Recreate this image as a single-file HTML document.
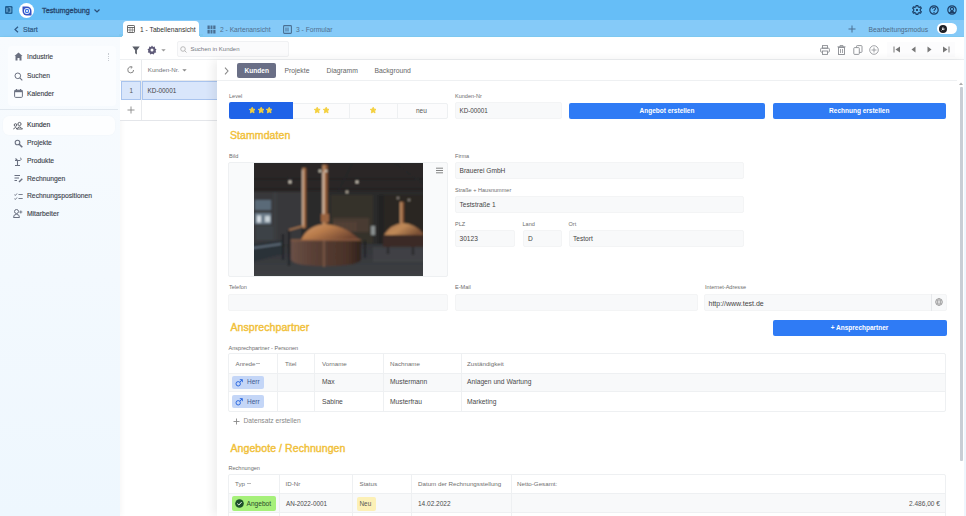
<!DOCTYPE html>
<html><head><meta charset="utf-8">
<style>
*{box-sizing:border-box;margin:0;padding:0}
html,body{width:966px;height:516px;overflow:hidden;background:#fff;font-family:"Liberation Sans",sans-serif;color:#333;}
.a{position:absolute}
.t{position:absolute;white-space:nowrap;line-height:1}
#top{left:0;top:0;width:966px;height:20px;background:#66bef7}
#bar2{left:0;top:20px;width:966px;height:17.5px;background:#85caf8}
#side{left:0;top:37px;width:120px;height:479px;background:linear-gradient(#f8fbfe,#eef7fe);box-shadow:2px 0 5px rgba(0,0,0,0.035)}
.sitem{position:absolute;left:0;width:120px;height:18px}
.sitem .t{left:27px;top:6px;font-size:6.75px;color:#3b3f4a;-webkit-text-stroke:0.12px #3b3f4a}
.sitem svg{position:absolute}
.lbl{position:absolute;white-space:nowrap;line-height:1;font-size:5.55px;color:#6e6e6e}
.inp{position:absolute;background:#f8f9fa;border:1px solid #f3f4f5;border-radius:2px}
.itx{position:absolute;white-space:nowrap;line-height:1;font-size:6.6px;color:#454545}
.btn{position:absolute;background:#2f7bf5;border-radius:2px;color:#fff;font-weight:bold;font-size:6.5px;text-align:center;line-height:16.5px}
.h2{position:absolute;white-space:nowrap;line-height:1;font-size:10.5px;color:#f1bf38;-webkit-text-stroke:0.4px #f1bf38;letter-spacing:0.08px}
.th{position:absolute;white-space:nowrap;line-height:1;font-size:6.2px;color:#707070}
.td{position:absolute;white-space:nowrap;line-height:1;font-size:6.7px;color:#4a4a4a}
.ftab{position:absolute;white-space:nowrap;line-height:1;font-size:6.8px;color:#666}
.vl{position:absolute;width:1px;background:#eef0f2}
</style></head><body>

<div id="top" class="a">
  <svg class="a" style="left:5px;top:5.8px" width="7.5" height="8" viewBox="0 0 7.5 8"><rect x="0" y="0" width="7.5" height="8" rx="1.2" fill="#1f5f92"/><path d="M2 1.8V6.2" stroke="#8cc6ee" stroke-width="0.9"/><path d="M3.6 1.8H5.8V6.2H3.6" fill="none" stroke="#8cc6ee" stroke-width="0.8"/></svg>
  <div class="a" style="left:19px;top:2.7px;width:15.4px;height:15.4px;border-radius:50%;background:#fff"></div>
  <svg class="a" style="left:22px;top:5.5px" width="10" height="10" viewBox="0 0 10 10"><path d="M0.5 0.5H5A4.5 4.5 0 0 1 9.5 5V9.5H5A4.5 4.5 0 0 1 0.5 5Z" fill="#3552c4"/><circle cx="5" cy="5" r="3" fill="#fff"/><circle cx="5" cy="5" r="2.2" fill="#3a74e6"/><circle cx="5" cy="5" r="1" fill="#fff"/></svg>
  <div class="t" style="left:42px;top:7px;font-size:7.3px;color:#274870;-webkit-text-stroke:0.3px #274870">Testumgebung</div>
  <svg class="a" style="left:94px;top:8.8px" width="6" height="4" viewBox="0 0 6 4"><path d="M0.5 0.5 L3 3 L5.5 0.5" fill="none" stroke="#2b4f78" stroke-width="1.2"/></svg>
  <svg class="a" style="left:911.5px;top:5px" width="10" height="10" viewBox="0 0 10 10"><path d="M4.2 0.5H5.8L6.1 1.8L7.3 2.4L8.5 1.8L9.3 3.2L8.3 4.1V5.9L9.3 6.8L8.5 8.2L7.3 7.6L6.1 8.2L5.8 9.5H4.2L3.9 8.2L2.7 7.6L1.5 8.2L0.7 6.8L1.7 5.9V4.1L0.7 3.2L1.5 1.8L2.7 2.4L3.9 1.8Z" fill="none" stroke="#1d3f66" stroke-width="1.2" stroke-linejoin="round"/><circle cx="5" cy="5" r="1" fill="#0e2240"/></svg>
  <svg class="a" style="left:929.4px;top:5.2px" width="10" height="10" viewBox="0 0 10 10"><circle cx="5" cy="5" r="4.2" fill="none" stroke="#1d3f66" stroke-width="1.2"/><path d="M3.5 3.8Q3.5 2.3 5 2.3Q6.5 2.3 6.5 3.6Q6.5 4.5 5.6 4.9Q5 5.2 5 6" fill="none" stroke="#1d3f66" stroke-width="1.1"/><circle cx="5" cy="7.5" r="0.7" fill="#1d3f66"/></svg>
  <svg class="a" style="left:946.8px;top:5.2px" width="10" height="10" viewBox="0 0 10 10"><circle cx="5" cy="5" r="4.2" fill="none" stroke="#1d3f66" stroke-width="1.2"/><circle cx="5" cy="4" r="1.6" fill="none" stroke="#1d3f66" stroke-width="1.1"/><path d="M2.3 8.2Q3 6.3 5 6.3Q7 6.3 7.7 8.2" fill="#1d3f66" stroke="#1d3f66" stroke-width="1"/></svg>
</div>
<div id="bar2" class="a">
  <svg class="a" style="left:14px;top:5.5px" width="5" height="7" viewBox="0 0 5 7"><path d="M4 0.7 L1 3.5 L4 6.3" fill="none" stroke="#2f5a86" stroke-width="1.2"/></svg>
  <div class="t" style="left:23px;top:5.5px;font-size:7px;color:#2f5a86;-webkit-text-stroke:0.2px #2f5a86">Start</div>
  <div class="a" style="left:0;top:15.5px;width:966px;height:2px;background:#7dc8f0"></div>
  <div class="a" style="left:119px;top:13.5px;width:4px;height:4px;background:radial-gradient(circle at 0 0,#7dc8f0 3.8px,#fff 4.2px)"></div>
  <div class="a" style="left:199px;top:13.5px;width:4px;height:4px;background:radial-gradient(circle at 100% 0,#7dc8f0 3.8px,#fff 4.2px)"></div>
  <div class="a" style="left:123px;top:1px;width:76px;height:16.5px;background:#fff;border-radius:4px 4px 0 0"></div>
  <svg class="a" style="left:127px;top:5px" width="8" height="8" viewBox="0 0 8 8"><rect x="0.5" y="0.5" width="7" height="7" rx="0.6" fill="none" stroke="#5a5a5a" stroke-width="0.9"/><line x1="0.5" y1="2.5" x2="7.5" y2="2.5" stroke="#5a5a5a" stroke-width="0.9"/><line x1="0.5" y1="5" x2="7.5" y2="5" stroke="#5a5a5a" stroke-width="0.6"/><line x1="3" y1="2.5" x2="3" y2="7.5" stroke="#5a5a5a" stroke-width="0.6"/><line x1="5.3" y1="2.5" x2="5.3" y2="7.5" stroke="#5a5a5a" stroke-width="0.6"/></svg>
  <div class="t" style="left:140px;top:6.5px;font-size:6.7px;color:#333">1 - Tabellenansicht</div>
  <svg class="a" style="left:207px;top:5px" width="9" height="9" viewBox="0 0 9 9"><rect x="0.5" y="0.5" width="8" height="8" fill="#4a6f92"/><line x1="3.2" y1="0" x2="3.2" y2="9" stroke="#85caf8" stroke-width="0.8"/><line x1="5.8" y1="0" x2="5.8" y2="9" stroke="#85caf8" stroke-width="0.8"/><line x1="0" y1="4.5" x2="9" y2="4.5" stroke="#85caf8" stroke-width="0.8"/></svg>
  <div class="t" style="left:220px;top:6.5px;font-size:6.7px;color:#50708f">2 - Kartenansicht</div>
  <svg class="a" style="left:283px;top:5px" width="9" height="9" viewBox="0 0 9 9"><rect x="0.6" y="0.6" width="7.8" height="7.8" rx="0.8" fill="none" stroke="#4a6f92" stroke-width="1.1"/><line x1="3" y1="2.5" x2="3" y2="6.5" stroke="#4a6f92" stroke-width="1"/><line x1="5" y1="2.5" x2="5" y2="6.5" stroke="#4a6f92" stroke-width="1"/></svg>
  <div class="t" style="left:296px;top:6.5px;font-size:6.7px;color:#50708f">3 - Formular</div>
  <svg class="a" style="left:848px;top:4.5px" width="8" height="8" viewBox="0 0 8 8"><path d="M4 0.5V7.5M0.5 4H7.5" stroke="#4a6f92" stroke-width="1"/></svg>
  <div class="t" style="left:868.5px;top:6.5px;font-size:6.7px;color:#4c6a88">Bearbeitungsmodus</div>
  <div class="a" style="left:937px;top:3px;width:20px;height:11px;border-radius:6px;background:#fff"></div>
  <div class="a" style="left:939px;top:4.5px;width:8px;height:8px;border-radius:50%;background:#1e1e24"></div>
  <svg class="a" style="left:940.5px;top:6px" width="5" height="5" viewBox="0 0 5 5"><path d="M0.6 4.4L2.6 2.4M2.3 1.4A1.1 1.1 0 1 0 3.6 2.7" fill="none" stroke="#fff" stroke-width="0.9"/></svg>
</div>

<div id="side" class="a">
  <div class="a" style="left:8px;top:9px;width:108px;height:60px;background:#fbfdff;border-radius:4px"></div>
  <div class="a" style="left:108px;top:16px;width:1.5px;height:8px;border-left:1px dotted #c8ccd2"></div>
  <div class="a" style="left:0;top:71.5px;width:118px;height:1px;background:#e1e8ef"></div>
  <div class="a" style="left:3px;top:78.5px;width:112px;height:19px;background:#fdfeff;border-radius:6px;box-shadow:0 0 2px rgba(0,0,0,0.03)"></div>
  <div class="sitem" style="top:11px">
    <svg width="9" height="9" viewBox="0 0 9 9" style="left:13.5px;top:4px"><path d="M4.5 0.5 L8.5 4 L7.5 4 L7.5 8.5 L5.5 8.5 L5.5 6 L3.5 6 L3.5 8.5 L1.5 8.5 L1.5 4 L0.5 4 Z" fill="#6a7080"/></svg>
    <div class="t">Industrie</div></div>
  <div class="sitem" style="top:30px">
    <svg width="9" height="9" viewBox="0 0 9 9" style="left:13.5px;top:4.5px"><circle cx="3.8" cy="3.8" r="2.8" fill="none" stroke="#6a7080" stroke-width="1"/><path d="M5.8 5.8 L8.3 8.3" stroke="#6a7080" stroke-width="1.1"/></svg>
    <div class="t">Suchen</div></div>
  <div class="sitem" style="top:48px">
    <svg width="9" height="9" viewBox="0 0 9 9" style="left:13.5px;top:4px"><rect x="0.6" y="1.2" width="7.8" height="7.2" rx="1" fill="none" stroke="#6a7080" stroke-width="1"/><rect x="0.6" y="1.2" width="7.8" height="2" fill="#6a7080"/><path d="M2.5 0V1.5M6.5 0V1.5" stroke="#6a7080" stroke-width="1"/></svg>
    <div class="t">Kalender</div></div>
  <div class="sitem" style="top:79px">
    <svg width="10" height="9" viewBox="0 0 10 9" style="left:13px;top:4.5px"><circle cx="2.5" cy="4" r="1.3" fill="none" stroke="#3b3f4a" stroke-width="0.8"/><circle cx="6.5" cy="3" r="1.6" fill="none" stroke="#3b3f4a" stroke-width="0.8"/><path d="M0.3 8 Q2.5 5 4.5 8 M3.5 8 Q6.5 4 9.5 8Z" fill="none" stroke="#3b3f4a" stroke-width="0.8"/></svg>
    <div class="t" style="color:#2a2d36">Kunden</div></div>
  <div class="sitem" style="top:97px">
    <svg width="9" height="9" viewBox="0 0 9 9" style="left:13.5px;top:4.5px"><circle cx="3.5" cy="3.5" r="2.3" fill="none" stroke="#6a7080" stroke-width="1.1"/><path d="M5 5 L8.3 8.3" stroke="#6a7080" stroke-width="1.6"/></svg>
    <div class="t">Projekte</div></div>
  <div class="sitem" style="top:115px">
    <svg width="9" height="9" viewBox="0 0 9 9" style="left:13.5px;top:4.5px"><path d="M1 8.5H6M3.5 8.5V3.5M1 3.5H6M1.5 1.5 L3.5 3.5" stroke="#6a7080" stroke-width="1.1" fill="none"/><path d="M6 0.8 Q8.5 1.5 6.5 3.5" stroke="#6a7080" stroke-width="0.9" fill="none"/></svg>
    <div class="t">Produkte</div></div>
  <div class="sitem" style="top:132.5px">
    <svg width="9" height="9" viewBox="0 0 9 9" style="left:13.5px;top:4.5px"><path d="M0.5 1.5H6M0.5 4H5M0.5 6.5H3" stroke="#6a7080" stroke-width="1" fill="none"/><path d="M5 8 L8.3 4.7" stroke="#6a7080" stroke-width="1.4"/></svg>
    <div class="t">Rechnungen</div></div>
  <div class="sitem" style="top:150px">
    <svg width="9" height="9" viewBox="0 0 9 9" style="left:13.5px;top:4.5px"><path d="M0.3 2.5L1.3 3.5L3 1.5M0.3 6.5L1.3 7.5L3 5.5M4.5 2.5H8.7M4.5 6.5H8.7" stroke="#6a7080" stroke-width="0.9" fill="none"/></svg>
    <div class="t">Rechnungspositionen</div></div>
  <div class="sitem" style="top:167.5px">
    <svg width="10" height="9" viewBox="0 0 10 9" style="left:13px;top:4.5px"><circle cx="3.5" cy="2.5" r="2" fill="none" stroke="#6a7080" stroke-width="1"/><path d="M0.5 8.5 Q0.5 5.3 3.5 5.3 Q6.5 5.3 6.5 8.5Z" fill="none" stroke="#6a7080" stroke-width="1"/><path d="M7.8 1.5V4.5M6.3 3H9.3" stroke="#6a7080" stroke-width="0.9"/></svg>
    <div class="t">Mitarbeiter</div></div>
</div>

<div class="a" style="left:120px;top:37px;width:846px;height:23px;background:#fff;border-bottom:1px solid #eef0f2"></div>
<svg class="a" style="left:131.8px;top:45.5px" width="8" height="9" viewBox="0 0 8 9"><path d="M0.3 0.5H7.7L4.9 4.2V8.5L3.1 7.3V4.2Z" fill="#5b5f69"/></svg>
<svg class="a" style="left:147px;top:44.5px" width="10" height="10" viewBox="0 0 10 10"><path d="M5 0.6 L6.1 2 L7.8 1.6 L8 3.4 L9.5 4.3 L8.6 5.8 L9.2 7.4 L7.5 7.8 L6.8 9.4 L5 8.7 L3.2 9.4 L2.5 7.8 L0.8 7.4 L1.4 5.8 L0.5 4.3 L2 3.4 L2.2 1.6 L3.9 2 Z" fill="#5e5a78"/><circle cx="5" cy="5" r="1.5" fill="#fff"/></svg>
<svg class="a" style="left:160.5px;top:48.5px" width="5" height="3" viewBox="0 0 5 3"><path d="M0.3 0.3L2.5 2.5L4.7 0.3Z" fill="#999"/></svg>
<div class="a" style="left:177px;top:41px;width:112px;height:16px;background:#fbfbfc;border:1px solid #f0f1f3;border-radius:2px"></div>
<svg class="a" style="left:180px;top:45.5px" width="7" height="7" viewBox="0 0 7 7"><circle cx="3" cy="3" r="2.3" fill="none" stroke="#aaa" stroke-width="0.8"/><path d="M4.7 4.7L6.5 6.5" stroke="#aaa" stroke-width="0.8"/></svg>
<div class="t" style="left:190.5px;top:46px;font-size:6px;color:#74787e">Suchen in Kunden</div>

<svg class="a" style="left:820px;top:45px" width="10" height="10" viewBox="0 0 10 10"><rect x="2.5" y="0.6" width="5" height="2.6" fill="none" stroke="#8a8d92" stroke-width="0.9"/><rect x="0.6" y="3.2" width="8.8" height="4" rx="1" fill="none" stroke="#8a8d92" stroke-width="0.9"/><rect x="2.5" y="6" width="5" height="3.4" fill="#fff" stroke="#8a8d92" stroke-width="0.9"/></svg>
<svg class="a" style="left:836.5px;top:44.5px" width="9" height="10" viewBox="0 0 9 10"><path d="M0.5 1.8H8.5M3 1.8V0.6H6V1.8" stroke="#8a8d92" stroke-width="0.9" fill="none"/><rect x="1.5" y="2.5" width="6" height="7" fill="none" stroke="#8a8d92" stroke-width="0.9"/><path d="M3.5 4V8M5.5 4V8" stroke="#8a8d92" stroke-width="0.8"/></svg>
<svg class="a" style="left:852.5px;top:44.5px" width="10" height="10" viewBox="0 0 10 10"><rect x="3.5" y="0.6" width="5.5" height="6.8" rx="0.8" fill="none" stroke="#8a8d92" stroke-width="0.9"/><rect x="0.8" y="2.6" width="5.5" height="6.8" rx="0.8" fill="#fff" stroke="#8a8d92" stroke-width="0.9"/></svg>
<svg class="a" style="left:868.5px;top:44.5px" width="10" height="10" viewBox="0 0 10 10"><circle cx="5" cy="5" r="4.3" fill="none" stroke="#8a8d92" stroke-width="0.8"/><path d="M5 2.5V7.5M2.5 5H7.5" stroke="#8a8d92" stroke-width="0.8"/></svg>
<div class="a" style="left:887px;top:42px;width:68px;height:15px;background:#fcfcfd"></div>
<svg class="a" style="left:893px;top:46px" width="8" height="7" viewBox="0 0 8 7"><path d="M1 0.5V6.5" stroke="#777" stroke-width="1"/><path d="M7 0.5V6.5L2.5 3.5Z" fill="#777"/></svg>
<svg class="a" style="left:910px;top:46px" width="7" height="7" viewBox="0 0 7 7"><path d="M5.5 0.5V6.5L1.5 3.5Z" fill="#777"/></svg>
<svg class="a" style="left:926px;top:46px" width="7" height="7" viewBox="0 0 7 7"><path d="M1.5 0.5V6.5L5.5 3.5Z" fill="#777"/></svg>
<svg class="a" style="left:942px;top:46px" width="8" height="7" viewBox="0 0 8 7"><path d="M7 0.5V6.5" stroke="#777" stroke-width="1"/><path d="M1 0.5V6.5L5.5 3.5Z" fill="#777"/></svg>

<div class="a" style="left:120px;top:60px;width:97px;height:60px;background:#fff"></div>
<div class="a" style="left:141px;top:60px;width:1px;height:60px;background:#e8eaed"></div>
<div class="a" style="left:120px;top:79.5px;width:97px;height:1px;background:#e8eaed"></div>
<div class="a" style="left:120px;top:119.5px;width:97px;height:1.5px;background:#e4e6ea"></div>
<svg class="a" style="left:127px;top:66px" width="8" height="8" viewBox="0 0 8 8"><path d="M6.6 4 A2.9 2.9 0 1 1 4.6 1.2" fill="none" stroke="#777" stroke-width="0.9"/><path d="M3.4 0.2L5.3 1.2L3.8 2.6" fill="none" stroke="#777" stroke-width="0.8"/></svg>
<div class="t" style="left:147.8px;top:67px;font-size:6.2px;color:#6e7178">Kunden-Nr.</div>
<svg class="a" style="left:181.5px;top:69px" width="5" height="3" viewBox="0 0 5 3"><path d="M0.3 0.3L2.5 2.5L4.7 0.3Z" fill="#888"/></svg>
<div class="a" style="left:120.5px;top:80.5px;width:20px;height:19.5px;background:#d9e6fb;border:1px solid #a9c4ee"></div>
<div class="a" style="left:142px;top:80.5px;width:76px;height:19.5px;background:#d9e6fb;border:1px solid #a9c4ee;border-right:none"></div>
<div class="t" style="left:129.5px;top:87.5px;font-size:6.3px;color:#555">1</div>
<div class="t" style="left:147.5px;top:87.5px;font-size:6.4px;color:#444">KD-00001</div>
<svg class="a" style="left:127px;top:106px" width="8" height="8" viewBox="0 0 8 8"><path d="M4 0.5V7.5M0.5 4H7.5" stroke="#888" stroke-width="0.9"/></svg>

<div id="form" class="a" style="left:217px;top:60px;width:749px;height:456px;background:#fff;box-shadow:-4px 0 9px rgba(0,0,0,0.07)"></div>
<div class="a" style="left:217px;top:79.5px;width:740px;height:1px;background:#eef0f2"></div>
<svg class="a" style="left:224px;top:66.5px" width="5" height="8" viewBox="0 0 5 8"><path d="M1 0.7L4 4L1 7.3" fill="none" stroke="#888" stroke-width="1.1"/></svg>
<div class="a" style="left:237px;top:62.5px;width:39px;height:15px;background:#6a6f86;border-radius:2px"></div>
<div class="ftab" style="left:244.5px;top:67.5px;color:#fff;font-weight:bold;font-size:6.6px">Kunden</div>
<div class="ftab" style="left:284.5px;top:67.5px">Projekte</div>
<div class="ftab" style="left:326.5px;top:67.5px">Diagramm</div>
<div class="ftab" style="left:374.5px;top:67.5px">Background</div>

<div class="lbl" style="left:229px;top:93.5px">Level</div>
<div class="inp" style="left:229px;top:102.5px;width:219px;height:16px;background:#fcfcfd;border:1px solid #eef0f2"></div>
<div class="a" style="left:229px;top:102px;width:64px;height:17px;background:#1f63e8;border-radius:2px 0 0 2px"></div>
<div class="vl" style="left:349px;top:103px;height:15px"></div>
<div class="vl" style="left:397px;top:103px;height:15px"></div>
<svg class="a" style="left:248.8px;top:107.2px" width="6.4" height="6.4" viewBox="0 0 10 10"><path d="M5 0.4L6.35 3.35L9.6 3.7L7.15 5.9L7.9 9.3L5 7.6L2.1 9.3L2.85 5.9L0.4 3.7L3.65 3.35Z" fill="#f4d03e" stroke="#f4d03e" stroke-width="1.4" stroke-linejoin="round"/></svg><svg class="a" style="left:257.5px;top:107.2px" width="6.4" height="6.4" viewBox="0 0 10 10"><path d="M5 0.4L6.35 3.35L9.6 3.7L7.15 5.9L7.9 9.3L5 7.6L2.1 9.3L2.85 5.9L0.4 3.7L3.65 3.35Z" fill="#f4d03e" stroke="#f4d03e" stroke-width="1.4" stroke-linejoin="round"/></svg><svg class="a" style="left:266.1px;top:107.2px" width="6.4" height="6.4" viewBox="0 0 10 10"><path d="M5 0.4L6.35 3.35L9.6 3.7L7.15 5.9L7.9 9.3L5 7.6L2.1 9.3L2.85 5.9L0.4 3.7L3.65 3.35Z" fill="#f4d03e" stroke="#f4d03e" stroke-width="1.4" stroke-linejoin="round"/></svg>
<svg class="a" style="left:314.3px;top:107.2px" width="6.4" height="6.4" viewBox="0 0 10 10"><path d="M5 0.4L6.35 3.35L9.6 3.7L7.15 5.9L7.9 9.3L5 7.6L2.1 9.3L2.85 5.9L0.4 3.7L3.65 3.35Z" fill="#f4d03e" stroke="#f4d03e" stroke-width="1.4" stroke-linejoin="round"/></svg><svg class="a" style="left:322.6px;top:107.2px" width="6.4" height="6.4" viewBox="0 0 10 10"><path d="M5 0.4L6.35 3.35L9.6 3.7L7.15 5.9L7.9 9.3L5 7.6L2.1 9.3L2.85 5.9L0.4 3.7L3.65 3.35Z" fill="#f4d03e" stroke="#f4d03e" stroke-width="1.4" stroke-linejoin="round"/></svg>
<svg class="a" style="left:369.8px;top:107.2px" width="6.4" height="6.4" viewBox="0 0 10 10"><path d="M5 0.4L6.35 3.35L9.6 3.7L7.15 5.9L7.9 9.3L5 7.6L2.1 9.3L2.85 5.9L0.4 3.7L3.65 3.35Z" fill="#f4d03e" stroke="#f4d03e" stroke-width="1.4" stroke-linejoin="round"/></svg>
<div class="itx" style="left:416px;top:108px;font-size:6.5px;color:#555">neu</div>

<div class="lbl" style="left:455px;top:93.5px">Kunden-Nr</div>
<div class="inp" style="left:455px;top:102px;width:107px;height:17px"></div>
<div class="itx" style="left:459.5px;top:108px;font-size:6.3px">KD-00001</div>
<div class="btn" style="left:569px;top:102.5px;width:196px;height:16.5px">Angebot erstellen</div>
<div class="btn" style="left:772.5px;top:102.5px;width:173.5px;height:16.5px">Rechnung erstellen</div>

<div class="h2" style="left:230px;top:130px">Stammdaten</div>
<div class="lbl" style="left:229px;top:153.5px">Bild</div>
<div class="inp" style="left:228px;top:162px;width:220px;height:114.5px;background:#f9fafb;border:1px solid #eef0f2"></div>
<div id="img" class="a" style="left:254px;top:162.5px;width:169px;height:113.5px;overflow:hidden;background:#2b2b2d"><svg width="169" height="113.5" viewBox="1 1 169 113.5" preserveAspectRatio="none">
<defs>
<filter id="bl" x="-5%" y="-5%" width="110%" height="110%"><feGaussianBlur stdDeviation="1"/></filter>
<linearGradient id="dome" x1="0" y1="0" x2="1" y2="0.6"><stop offset="0" stop-color="#d49c6c"/><stop offset="0.45" stop-color="#b97c4c"/><stop offset="1" stop-color="#6e4430"/></linearGradient>
<linearGradient id="body" x1="0" y1="0" x2="1" y2="0"><stop offset="0" stop-color="#6a5046"/><stop offset="0.3" stop-color="#5a4036"/><stop offset="0.8" stop-color="#4a3228"/><stop offset="1" stop-color="#30221c"/></linearGradient>
<linearGradient id="floor" x1="0" y1="0" x2="0" y2="1"><stop offset="0" stop-color="#333538"/><stop offset="1" stop-color="#3e4044"/></linearGradient>
<linearGradient id="pipe" x1="0" y1="0" x2="1" y2="0"><stop offset="0" stop-color="#d0a078"/><stop offset="0.5" stop-color="#a46c44"/><stop offset="1" stop-color="#5a3622"/></linearGradient>
<linearGradient id="rdome" x1="0" y1="0" x2="1" y2="0.5"><stop offset="0" stop-color="#a87450"/><stop offset="0.5" stop-color="#c08a58"/><stop offset="1" stop-color="#7a5034"/></linearGradient>
</defs>
<g filter="url(#bl)">
<rect x="0" y="0" width="172" height="116" fill="#2a2a2b"/>
<rect x="0" y="0" width="172" height="30" fill="#292728"/>
<path d="M0 17H172M0 27H172" stroke="#1e1d1e" stroke-width="1.2"/>
<path d="M20 0L50 30M100 0L85 30M140 0L175 25" stroke="#29282a" stroke-width="1.5"/>
<rect x="0" y="30" width="48" height="52" fill="#38393b"/>
<rect x="2" y="38" width="16" height="10" fill="#5a6a78"/>
<rect x="2" y="51" width="16" height="11" fill="#6a7a88"/>
<rect x="4" y="53.5" width="4" height="7" fill="#d8e0e6"/>
<rect x="12" y="54" width="5" height="6" fill="#c8d2d8"/>
<rect x="3" y="64" width="20" height="14" fill="#3e4246"/>
<rect x="20" y="30" width="4" height="52" fill="#3a3c40"/>
<rect x="78" y="33" width="42" height="48" fill="#34302c"/>
<rect x="80" y="56" width="36" height="14" fill="#4a3a30"/>
<path d="M82 60V69M86 60V69M90 60V69M94 60V69M98 60V69M102 60V69" stroke="#6a5040" stroke-width="1"/>
<rect x="118" y="64" width="4" height="9" fill="#8a9090"/>
<rect x="125" y="33" width="6" height="52" fill="#232222"/>
<rect x="131" y="33" width="41" height="50" fill="#2a2624"/>
<rect x="0" y="82" width="172" height="34" fill="url(#floor)"/>
<path d="M0 82L30 78L30 92L0 100Z" fill="#2c3238"/>
<path d="M0 86L28 82" stroke="#6a7a88" stroke-width="1.5"/>
<path d="M120 85H172V100H120Z" fill="#46484b" opacity="0.6"/>
<rect x="49.5" y="6" width="4" height="60" fill="url(#pipe)"/><rect x="49.3" y="8" width="0.9" height="56" fill="#e8d8c8"/>
<rect x="69.5" y="3" width="5.5" height="60" fill="url(#pipe)"/><rect x="69.8" y="10" width="1" height="42" fill="#f0e0d0"/>
<rect x="68" y="52" width="8" height="8" fill="#9a6440"/>
<path d="M147 40H151V62H147Z" fill="url(#pipe)"/>
<path d="M131 73Q138 62 150 61Q162 62 170 71V74H131Z" fill="url(#rdome)"/>
<rect x="130" y="73" width="42" height="12" fill="#3a2c26"/>
<path d="M135 85V92M160 85V93" stroke="#1e1c1c" stroke-width="1.5"/>
<path d="M48 78Q54 64 71 62Q92 63 107 78Z" fill="url(#dome)"/>
<path d="M38 78H108V97Q108 104 73 104Q38 104 38 97Z" fill="url(#body)"/>
<path d="M38 78H108" stroke="#a06a48" stroke-width="1.2"/>
<path d="M71 78V105" stroke="#8a6450" stroke-width="1.3"/>
<path d="M30 72V98M36 68V104M112 78V96" stroke="#1a1a1c" stroke-width="1.4"/>
<path d="M36 68L50 64" stroke="#b07a50" stroke-width="1.4"/>
<circle cx="37" cy="20" r="1.4" fill="#e8e0d0"/>
<circle cx="67" cy="9" r="1.3" fill="#d8d0c0"/>
<circle cx="73" cy="9" r="1.3" fill="#d8d0c0"/>
<circle cx="104" cy="20" r="1.3" fill="#e8e0d0"/>
<circle cx="94" cy="30" r="1.2" fill="#c8c0b0"/>
<circle cx="145" cy="36" r="1" fill="#b0a8a0"/>
<circle cx="156" cy="38" r="1" fill="#b0a8a0"/>
</g></svg></div>

<svg class="a" style="left:435.5px;top:167px" width="7" height="7" viewBox="0 0 7 7"><path d="M0 1.2H7M0 3.5H7M0 5.8H7" stroke="#666" stroke-width="0.8"/></svg>

<div class="lbl" style="left:455px;top:153.5px">Firma</div>
<div class="inp" style="left:455px;top:161.5px;width:289px;height:17px"></div>
<div class="itx" style="left:459.5px;top:168px">Brauerei GmbH</div>
<div class="lbl" style="left:455px;top:187.5px">Straße + Hausnummer</div>
<div class="inp" style="left:455px;top:195.5px;width:289px;height:17px"></div>
<div class="itx" style="left:459.5px;top:202px">Teststraße 1</div>
<div class="lbl" style="left:455px;top:221.5px">PLZ</div>
<div class="lbl" style="left:522.5px;top:221.5px">Land</div>
<div class="lbl" style="left:568.5px;top:221.5px">Ort</div>
<div class="inp" style="left:455px;top:229.5px;width:59.5px;height:17px"></div>
<div class="inp" style="left:522.5px;top:229.5px;width:39.5px;height:17px"></div>
<div class="inp" style="left:568.5px;top:229.5px;width:175.5px;height:17px"></div>
<div class="itx" style="left:459.5px;top:236px">30123</div>
<div class="itx" style="left:528px;top:236px">D</div>
<div class="itx" style="left:573px;top:236px">Testort</div>

<div class="lbl" style="left:229px;top:285px">Telefon</div>
<div class="inp" style="left:228px;top:294px;width:220px;height:16.5px"></div>
<div class="lbl" style="left:455px;top:285px">E-Mail</div>
<div class="inp" style="left:455px;top:294px;width:243px;height:16.5px"></div>
<div class="lbl" style="left:705px;top:285px">Internet-Adresse</div>
<div class="inp" style="left:704px;top:294px;width:243px;height:16.5px"></div>
<div class="a" style="left:931px;top:294px;width:1px;height:16.5px;background:#e6e8eb"></div>
<div class="itx" style="left:708.5px;top:299.5px;font-size:7px">http://www.test.de</div>
<svg class="a" style="left:935px;top:298px" width="8" height="8" viewBox="0 0 8 8"><circle cx="4" cy="4" r="3.4" fill="none" stroke="#888" stroke-width="0.7"/><ellipse cx="4" cy="4" rx="1.5" ry="3.4" fill="none" stroke="#888" stroke-width="0.6"/><path d="M0.6 4H7.4M1 2.3H7M1 5.7H7" stroke="#888" stroke-width="0.5"/></svg>

<div class="h2" style="left:230.5px;top:322px">Ansprechpartner</div>
<div class="btn" style="left:772.5px;top:320px;width:174px;height:16px;line-height:16px;font-size:6.5px">+ Ansprechpartner</div>
<div class="lbl" style="left:228.5px;top:345.5px">Ansprechpartner - Personen</div>
<div class="a" style="left:228px;top:353px;width:718px;height:58.5px;border:1px solid #eef0f2;border-radius:2px"></div>
<div class="a" style="left:229px;top:372.5px;width:716px;height:19.5px;background:#f8f9fa;border-top:1px solid #eef0f2;border-bottom:1px solid #eef0f2"></div>
<div class="vl" style="left:277px;top:353.5px;height:58px"></div>
<div class="vl" style="left:314px;top:353.5px;height:58px"></div>
<div class="vl" style="left:382.5px;top:353.5px;height:58px"></div>
<div class="vl" style="left:460.5px;top:353.5px;height:58px"></div>
<div class="th" style="left:235.5px;top:360.5px">Anrede</div>
<svg class="a" style="left:256px;top:362.5px" width="4" height="2" viewBox="0 0 4 2"><path d="M0 0.5H4" stroke="#888" stroke-width="0.6"/></svg>
<div class="th" style="left:285px;top:360.5px">Titel</div>
<div class="th" style="left:322px;top:360.5px">Vorname</div>
<div class="th" style="left:390px;top:360.5px">Nachname</div>
<div class="th" style="left:467px;top:360.5px">Zuständigkeit</div>

<div class="a" style="left:232px;top:375.5px;width:32px;height:13px;background:#c4d6f7;border-radius:2px"></div>
<div class="a" style="left:232px;top:395px;width:32px;height:13px;background:#c4d6f7;border-radius:2px"></div>
<div class="td" style="left:247px;top:379px;font-size:6.5px;color:#3e5a90">Herr</div>
<div class="td" style="left:247px;top:398.5px;font-size:6.5px;color:#3e5a90">Herr</div>
<svg class="a" style="left:235px;top:378.5px" width="8" height="8" viewBox="0 0 8 8"><circle cx="3.2" cy="4.8" r="2.2" fill="none" stroke="#2d6ae0" stroke-width="1"/><path d="M4.8 3.2L7.3 0.7M4.8 0.7H7.3V3.2" fill="none" stroke="#2d6ae0" stroke-width="1"/></svg><svg class="a" style="left:235px;top:398px" width="8" height="8" viewBox="0 0 8 8"><circle cx="3.2" cy="4.8" r="2.2" fill="none" stroke="#2d6ae0" stroke-width="1"/><path d="M4.8 3.2L7.3 0.7M4.8 0.7H7.3V3.2" fill="none" stroke="#2d6ae0" stroke-width="1"/></svg>
<div class="td" style="left:322px;top:379px">Max</div>
<div class="td" style="left:390px;top:379px">Mustermann</div>
<div class="td" style="left:467px;top:379px">Anlagen und Wartung</div>
<div class="td" style="left:322px;top:398.5px">Sabine</div>
<div class="td" style="left:390px;top:398.5px">Musterfrau</div>
<div class="td" style="left:467px;top:398.5px">Marketing</div>

<svg class="a" style="left:232.5px;top:417.5px" width="7" height="7" viewBox="0 0 7 7"><path d="M3.5 0.5V6.5M0.5 3.5H6.5" stroke="#888" stroke-width="0.9"/></svg>
<div class="td" style="left:243.5px;top:418px;font-size:6.7px;color:#888">Datensatz erstellen</div>

<div class="h2" style="left:230.5px;top:442.5px">Angebote / Rechnungen</div>
<div class="lbl" style="left:228.5px;top:466px">Rechnungen</div>
<div class="a" style="left:228px;top:473.5px;width:718px;height:50px;border:1px solid #eef0f2;border-radius:2px"></div>
<div class="a" style="left:229px;top:493px;width:716px;height:20px;background:#f8f9fa;border-top:1px solid #eef0f2;border-bottom:1px solid #eef0f2"></div>
<div class="vl" style="left:278.5px;top:474.5px;height:45px"></div>
<div class="vl" style="left:352px;top:474.5px;height:45px"></div>
<div class="vl" style="left:410.5px;top:474.5px;height:45px"></div>
<div class="vl" style="left:510.5px;top:474.5px;height:45px"></div>
<div class="th" style="left:235px;top:481px">Typ</div>
<svg class="a" style="left:247px;top:483px" width="4" height="2" viewBox="0 0 4 2"><path d="M0 0.5H4" stroke="#888" stroke-width="0.6"/></svg>
<div class="th" style="left:285.5px;top:481px">ID-Nr</div>
<div class="th" style="left:359.5px;top:481px">Status</div>
<div class="th" style="left:418px;top:481px">Datum der Rechnungsstellung</div>
<div class="th" style="left:517px;top:481px">Netto-Gesamt:</div>
<div class="a" style="left:232px;top:495.8px;width:43.5px;height:14.8px;background:#a6f07a;border-radius:2px"></div>
<svg class="a" style="left:235.3px;top:499px" width="9" height="9" viewBox="0 0 9 9"><circle cx="4.5" cy="4.5" r="4.3" fill="#1c4f2a"/><path d="M2.3 4.6L3.8 6L6.6 3.1" fill="none" stroke="#fff" stroke-width="1"/></svg>
<div class="td" style="left:246.5px;top:500.5px;font-size:6.6px;color:#2a4a2a">Angebot</div>
<div class="td" style="left:286px;top:500.5px;font-size:6.3px">AN-2022-0001</div>
<div class="a" style="left:356.5px;top:497px;width:19.5px;height:13.5px;background:#fcf0b6;border-radius:2px"></div>
<div class="td" style="left:359.5px;top:500.5px;color:#555;font-size:6.4px">Neu</div>
<div class="td" style="left:418px;top:500.5px;font-size:6.5px">14.02.2022</div>
<div class="td" style="left:909px;top:500.5px;font-size:6.55px;color:#555">2.486,00 €</div>

<div class="a" style="left:957.5px;top:81px;width:6px;height:435px;background:#fff"></div>
<div class="a" style="left:959.5px;top:87px;width:3px;height:374px;background:#c9ced5;border-radius:1px"></div>
<svg class="a" style="left:959px;top:81.5px" width="4" height="3" viewBox="0 0 4 3"><path d="M0 3L2 0.5L4 3Z" fill="#aaa"/></svg>
<div class="a" style="left:963.5px;top:0;width:2.5px;height:516px;background:#eef6fd"></div>

</body></html>
